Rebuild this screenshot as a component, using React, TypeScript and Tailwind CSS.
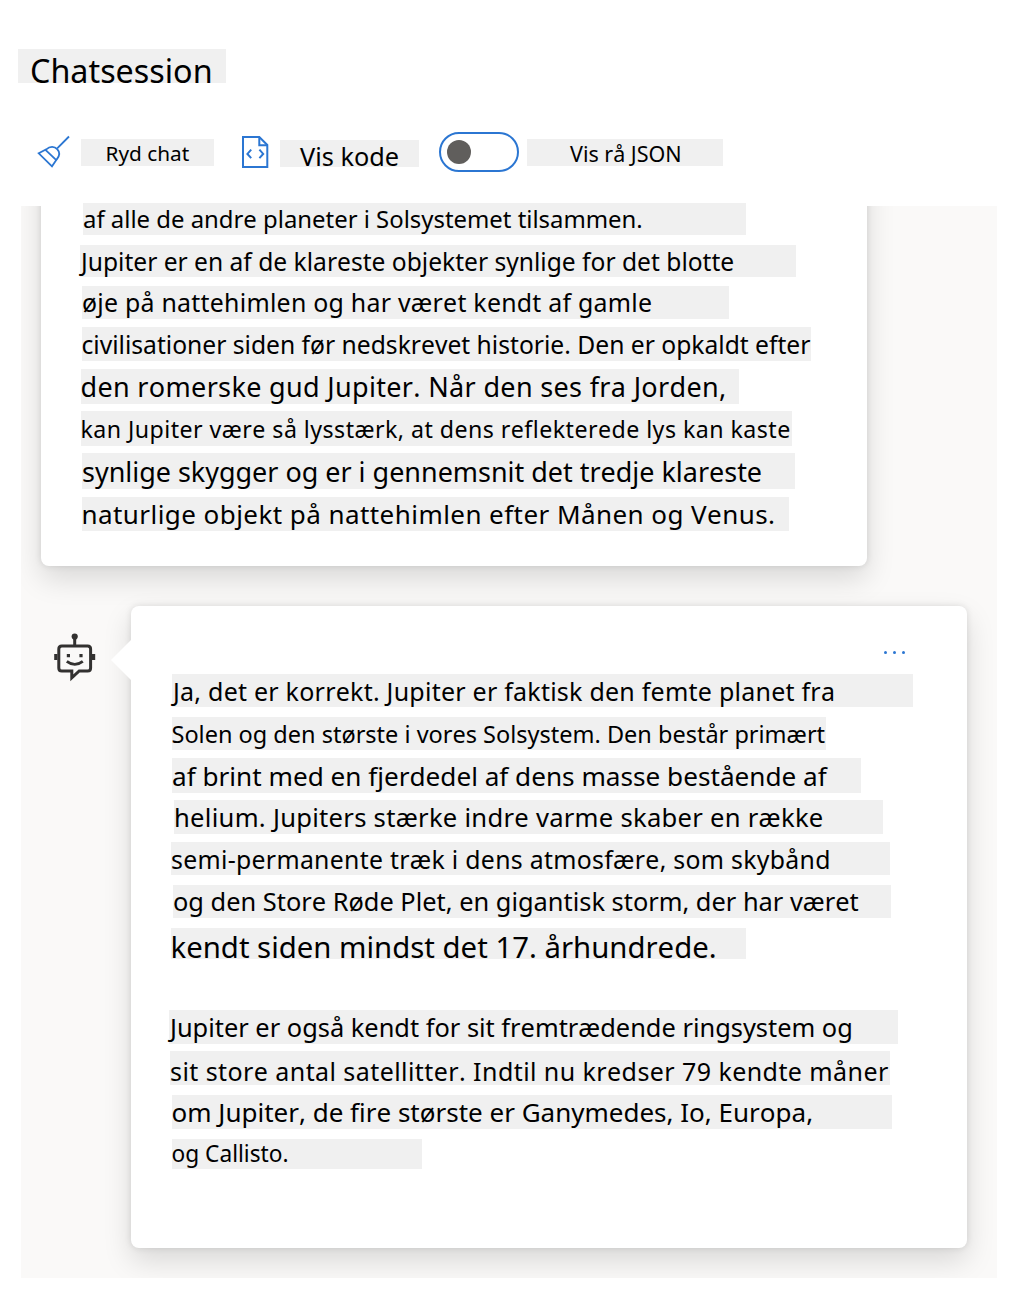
type Line = { text: string; box: string; type: string };

const firstMessage: Line[] = [
  { text: 'af alle de andre planeter i Solsystemet tilsammen.', box: 'mt-0 ml-[42px] w-[663px] h-[29px]', type: 'text-[23.9px] leading-[25px]' },
  { text: 'Jupiter er en af de klareste objekter synlige for det blotte', box: 'mt-[10px] ml-[39px] w-[716px] h-[32px] pl-[1px]', type: 'text-[24.6px] leading-[33px]' },
  { text: 'øje på nattehimlen og har været kendt af gamle', box: 'mt-[9px] ml-[41px] w-[647px] h-[33px]', type: 'text-[24.9px] leading-[33px] tracking-[0.25px]' },
  { text: 'civilisationer siden før nedskrevet historie. Den er opkaldt efter', box: 'mt-[8px] ml-[41px] w-[729px] h-[34px]', type: 'text-[24.65px] leading-[35px] -indent-[0.5px]' },
  { text: 'den romerske gud Jupiter. Når den ses fra Jorden,', box: 'mt-[8px] ml-[40px] w-[658px] h-[35px]', type: 'text-[27px] leading-[36px] tracking-[0.33px] -indent-[0.5px]' },
  { text: 'kan Jupiter være så lysstærk, at dens reflekterede lys kan kaste', box: 'mt-[7px] ml-[40px] w-[711px] h-[35px]', type: 'text-[23.2px] leading-[36px] tracking-[0.45px] -indent-[0.5px]' },
  { text: 'synlige skygger og er i gennemsnit det tredje klareste', box: 'mt-[7px] ml-[41px] w-[713px] h-[36px]', type: 'text-[26.95px] leading-[37px]' },
  { text: 'naturlige objekt på nattehimlen efter Månen og Venus.', box: 'mt-[8px] ml-[41px] w-[707px] h-[34px]', type: 'text-[26px] leading-[35px] tracking-[0.44px] -indent-[0.5px]' },
];

const secondMessage: Line[] = [
  { text: 'Ja, det er korrekt. Jupiter er faktisk den femte planet fra', box: 'mt-0 ml-[41px] w-[741px] h-[33px] pl-[1px]', type: 'text-[25px] leading-[34px] tracking-[0.24px]' },
  { text: 'Solen og den største i vores Solsystem. Den består primært', box: 'mt-[10px] ml-[41px] w-[654px] h-[33px]', type: 'text-[23.5px] leading-[34px] -indent-[0.5px]' },
  { text: 'af brint med en fjerdedel af dens masse bestående af', box: 'mt-[8px] ml-[41px] w-[689px] h-[35px]', type: 'text-[26.15px] leading-[36px]' },
  { text: 'helium. Jupiters stærke indre varme skaber en række', box: 'mt-[7px] ml-[43px] w-[709px] h-[34px]', type: 'text-[25.6px] leading-[35px] tracking-[0.27px]' },
  { text: 'semi-permanente træk i dens atmosfære, som skybånd', box: 'mt-[8px] ml-[40px] w-[719px] h-[33px]', type: 'text-[24.8px] leading-[34px] tracking-[0.31px]' },
  { text: 'og den Store Røde Plet, en gigantisk storm, der har været', box: 'mt-[10px] ml-[42px] w-[718px] h-[33px]', type: 'text-[25.4px] leading-[33px]' },
  { text: 'kendt siden mindst det 17. århundrede.', box: 'mt-[10px] ml-[40px] w-[575px] h-[31px]', type: 'text-[29.35px] leading-[38px] -indent-[0.5px]' },
  { text: 'Jupiter er også kendt for sit fremtrædende ringsystem og', box: 'mt-[51px] ml-[38px] w-[729px] h-[34px] pl-[1px]', type: 'text-[25.4px] leading-[34px]' },
  { text: 'sit store antal satellitter. Indtil nu kredser 79 kendte måner', box: 'mt-[7px] ml-[39px] w-[720px] h-[34px]', type: 'text-[25px] leading-[40px] tracking-[0.43px]' },
  { text: 'om Jupiter, de fire største er Ganymedes, Io, Europa,', box: 'mt-[10px] ml-[41px] w-[720px] h-[34px]', type: 'text-[26px] leading-[34px] -indent-[0.5px]' },
  { text: 'og Callisto.', box: 'mt-[10px] ml-[41px] w-[250px] h-[30px]', type: 'text-[22.7px] leading-[30px] -indent-[0.5px]' },
];

function Lines({ lines }: { lines: Line[] }) {
  return (
    <>
      {lines.map((line) => (
        <p key={line.text} className={`bg-[#f0f0f0] whitespace-nowrap ${line.box} ${line.type}`}>
          {line.text}
        </p>
      ))}
    </>
  );
}

function BroomIcon() {
  return (
    <svg width="34" height="34" viewBox="37 135 34 34" fill="none" stroke="#2b76d2" strokeWidth="1.8">
      <path d="M69 136.5 57.2 148.3" />
      <path d="M38.7 153.3 46.3 149.3C50 146 54.5 146.2 57.2 149.2 60 152.2 59.8 156 56.6 159.6L52 166.3Z" />
      <path d="M45.5 149.8 56.3 160.2" />
    </svg>
  );
}

function CodeFileIcon() {
  return (
    <svg width="27" height="32" viewBox="242 136 27 32" fill="none" stroke="#2b76d2" strokeWidth="2">
      <path d="M243 137H259.3L267.3 145V167H243Z" />
      <path d="M259.3 137V145.2H267.5" />
      <path d="M251.2 149.7 247.4 153.9 251.2 158.1M259.4 149.7 263.2 153.9 259.4 158.1" />
    </svg>
  );
}

function BotIcon() {
  return (
    <svg width="42" height="50" viewBox="54 633 42 50" fill="none" stroke="#323130" strokeWidth="3">
      <circle cx="74.7" cy="636.6" r="3.1" fill="#323130" stroke="none" />
      <path d="M74.7 637V646" />
      <path d="M71.8 671H61.8Q58.8 671 58.8 668V649Q58.8 646 61.8 646H87.6Q90.6 646 90.6 649V668Q90.6 671 87.6 671H79.2L71.8 677.8Z" />
      <path d="M54.2 654H57.5V660H54.2ZM92 654H95.2V660H92ZM66.8 654H70V657.2H66.8ZM79.4 654H82.6V657.2H79.4Z" fill="#323130" stroke="none" />
      <path d="M66.8 661.4Q74.8 667.4 82.8 661.4" strokeWidth="2.8" />
    </svg>
  );
}

const cardShadow = 'shadow-[0_12.8px_28.8px_rgba(0,0,0,0.132),0_0_7.2px_rgba(0,0,0,0.108)]';

export default function App() {
  return (
    <div className="h-[1292px] w-[1014px] overflow-hidden bg-white font-['Noto_Sans',sans-serif] text-black [font-kerning:none]">
      <header className="h-[206px] pt-[49px]">
        <h1 className="ml-[18px] h-[34px] w-[208px] bg-[#f0f0f0] pl-[12px] text-[32.3px] leading-[42px] whitespace-nowrap">Chatsession</h1>
        <div className="mt-[49px] flex h-[40px] items-start">
          <button className="mt-[3px] ml-[37px] flex items-start">
            <BroomIcon />
            <span className="mt-[4px] ml-[10px] h-[27px] w-[133px] bg-[#f0f0f0] pl-[24.5px] text-left text-[20.8px] leading-[28px] whitespace-nowrap">Ryd chat</span>
          </button>
          <button className="mt-[4px] ml-[28px] flex items-start">
            <CodeFileIcon />
            <span className="mt-[4px] ml-[11px] h-[27px] w-[139px] bg-[#f0f0f0] pl-[20px] text-left text-[25.3px] leading-[32px] whitespace-nowrap">Vis kode</span>
          </button>
          <button role="switch" aria-checked="false" aria-label="Vis rå JSON" className="ml-[20px] flex h-[40px] w-[80px] items-center rounded-full border-2 border-[#2b76d2] bg-white pl-[6px]">
            <span className="size-[24px] rounded-full bg-[#605e5c]" />
          </button>
          <span className="mt-[7px] ml-[8px] h-[27px] w-[196px] bg-[#f0f0f0] pl-[43px] text-[21.5px] leading-[29px] whitespace-nowrap">Vis rå JSON</span>
        </div>
        <div className="mt-[31px] ml-[83px] h-[3px] w-[663px] bg-[#f0f0f0]" />
      </header>

      <main className="ml-[21px] h-[1072px] w-[976px] overflow-hidden bg-[#faf9f8]">
        <section className={`-mt-[40px] ml-[20px] h-[400px] w-[826px] rounded-[8px] bg-white pt-[40px] ${cardShadow}`}>
          <Lines lines={firstMessage} />
        </section>

        <div className="mt-[40px] flex items-start">
          <div className="mt-[27px] ml-[33px]">
            <BotIcon />
          </div>
          <section className={`relative ml-[35px] h-[642px] w-[836px] rounded-[8px] bg-white ${cardShadow}`}>
            <svg className="absolute top-[34px] -left-[20px]" width="20" height="40" viewBox="0 0 20 40">
              <path d="M20 0 0 20 20 40Z" fill="#fff" />
            </svg>
            <div className="flex h-[68px] justify-end pt-[44.5px] pr-[62px]">
              <button aria-label="Flere" className="flex h-[3px] gap-[6px]">
                <span className="size-[3px] rounded-full bg-[#2b76d2]" />
                <span className="size-[3px] rounded-full bg-[#2b76d2]" />
                <span className="size-[3px] rounded-full bg-[#2b76d2]" />
              </button>
            </div>
            <Lines lines={secondMessage} />
          </section>
        </div>
      </main>
    </div>
  );
}
